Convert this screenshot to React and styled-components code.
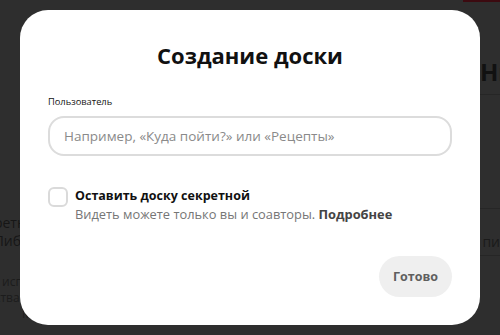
import React from "react";
import styled, { createGlobalStyle } from "styled-components";

const Global = createGlobalStyle`
  html, body { margin: 0; padding: 0; }
  body {
    width: 500px;
    height: 335px;
    overflow: hidden;
    background: #2e2e2e;
    font-family: "Open Sans", "Noto Sans", sans-serif;
  }
`;

const Page = styled.div`
  position: relative;
  width: 500px;
  height: 335px;
  overflow: hidden;
  display: grid;
  grid-template-columns: 20px 460px 20px;
  background: #2e2e2e;
`;

const SideLeft = styled.div`
  display: flex;
  flex-direction: column;
  align-items: flex-start;
  padding-top: 214px;
  min-width: 0;
`;

const SideText = styled.div`
  white-space: nowrap;
  margin-top: ${(p) => p.$mt || 0}px;
  margin-left: ${(p) => p.$ml || 0}px;
  font-size: ${(p) => p.$fs || 14}px;
  line-height: ${(p) => (p.$fs ? p.$fs + 4 : 18)}px;
  color: ${(p) => p.$c || "#161616"};
`;

const SideRight = styled.div`
  display: flex;
  flex-direction: column;
  grid-column: 3;
  min-width: 0;
`;

const RedBar = styled.div`
  height: 2px;
  margin-left: -17px;
  background: #3c0a10;
`;

const BigHeading = styled.div`
  margin-top: 54px;
  font-size: 24px;
  font-weight: 700;
  line-height: 32px;
  color: #111;
  white-space: nowrap;
`;

const Rule = styled.div`
  height: 1px;
  background: #262626;
  margin-top: ${(p) => p.$mt}px;
`;

const RightText = styled.div`
  margin-top: 24px;
  font-size: 14px;
  line-height: 18px;
  color: #1a1a1a;
  white-space: nowrap;
  margin-left: -8px;
`;

const Overlay = styled.div`
  position: absolute;
  inset: 0;
  display: flex;
  align-items: center;
  justify-content: center;
`;

const Modal = styled.div`
  width: 460px;
  height: 315px;
  box-sizing: border-box;
  background: #fff;
  border-radius: 28px;
  padding: 31px 28px 0;
  display: flex;
  flex-direction: column;
`;

const Title = styled.h1`
  margin: 0;
  text-align: center;
  font-size: 22px;
  line-height: 28px;
  font-weight: 700;
  color: #111;
`;

const Label = styled.label`
  margin-top: 26px;
  font-size: 9.3px;
  line-height: 14px;
  color: #111;
`;

const Input = styled.input`
  margin-top: 7px;
  height: 40px;
  box-sizing: border-box;
  border: 2px solid #dcdcdc;
  border-radius: 16px;
  padding: 0 14px;
  font-family: inherit;
  font-size: 13.5px;
  outline: none;
  &::placeholder { color: #8a8a8a; }
`;

const CheckRow = styled.div`
  margin-top: 31px;
  display: flex;
  gap: 7px;
  align-items: flex-start;
`;

const Box = styled.span`
  width: 20px;
  height: 20px;
  box-sizing: border-box;
  border: 2px solid #dadada;
  border-radius: 6px;
  flex: none;
`;

const CheckText = styled.div`
  display: flex;
  flex-direction: column;
`;

const CheckTitle = styled.div`
  font-size: 12.5px;
  line-height: 18px;
  font-weight: 700;
  color: #111;
`;

const CheckHint = styled.div`
  font-size: 12.85px;
  line-height: 18px;
  color: #767676;
  b { color: #444; font-weight: 700; }
`;

const Footer = styled.div`
  margin-top: 33px;
  display: flex;
  justify-content: flex-end;
`;

const Button = styled.button`
  height: 41px;
  width: 73px;
  border: none;
  border-radius: 21px;
  background: #efefef;
  color: #5f5f5f;
  font-family: inherit;
  font-size: 12.5px;
  font-weight: 700;
  padding: 0;
`;

export default function App() {
  return (
    <>
      <Global />
      <Page>
        <SideLeft>
          <SideText $ml={-30}>Секретной</SideText>
          <SideText $ml={-6}>Либо</SideText>
          <SideText $mt={24} $fs={12} $ml={2} $c="#1c1c1c">использования</SideText>
          <SideText $fs={12} $ml={-32} $c="#1c1c1c">средства</SideText>
          <SideText $fs={12} $ml={22} $c="#1c1c1c">Мы</SideText>
        </SideLeft>
        <SideRight>
          <RedBar />
          <BigHeading>Ни</BigHeading>
          <Rule $mt={6} />
          <Rule $mt={113} />
          <RightText>з пи</RightText>
          <Rule $mt={4} />
        </SideRight>
        <Overlay>
          <Modal>
            <Title>Создание доски</Title>
            <Label>Пользователь</Label>
            <Input placeholder="Например, «Куда пойти?» или «Рецепты»" />
            <CheckRow>
              <Box />
              <CheckText>
                <CheckTitle>Оставить доску секретной</CheckTitle>
                <CheckHint>
                  Видеть можете только вы и соавторы. <b>Подробнее</b>
                </CheckHint>
              </CheckText>
            </CheckRow>
            <Footer>
              <Button>Готово</Button>
            </Footer>
          </Modal>
        </Overlay>
      </Page>
    </>
  );
}
